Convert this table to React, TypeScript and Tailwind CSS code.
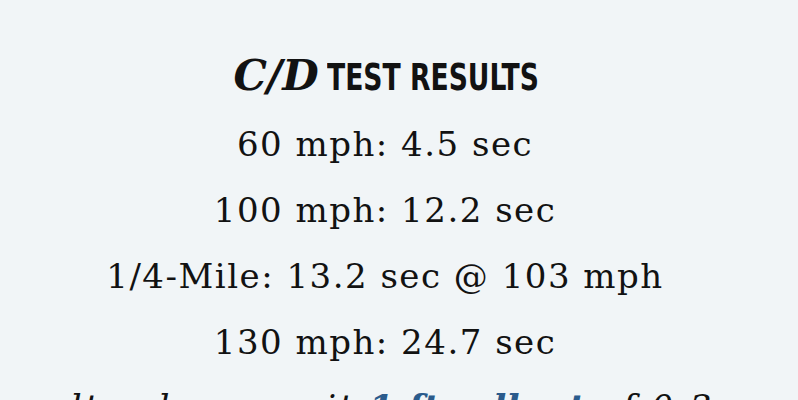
import React from "react";

const results = [
  "60 mph: 4.5 sec",
  "100 mph: 12.2 sec",
  "1/4-Mile: 13.2 sec @ 103 mph",
  "130 mph: 24.7 sec",
];

export default function App() {
  return (
    <div className="h-[400px] w-[798px] overflow-hidden bg-[#f1f5f7] text-[#121212]">
      <div className="flex flex-col items-center pr-[28px] pt-[43px] font-['DejaVu_Serif',serif] text-[34px] leading-[66px] tracking-[1.5px]">
        {/* Heading */}
        <h3 className="flex items-baseline gap-2 leading-[66px] tracking-normal">
          <span className="font-bold italic text-[42px]">C/D</span>
          <span className="inline-block w-[210px]">
            <span className="inline-block origin-left whitespace-nowrap font-['DejaVu_Sans_Condensed','DejaVu_Sans',sans-serif] text-[37px] font-bold scale-x-[0.8]">
              TEST RESULTS
            </span>
          </span>
        </h3>

        {results.map((r) => (
          <p key={r} className="whitespace-nowrap">
            {r}
          </p>
        ))}

        <p className="ml-[10px] whitespace-nowrap italic text-[35px] tracking-[2.5px]">
          Results above omit{" "}
          <a className="font-bold tracking-[0px] text-[#2b5b8c]">1-ft rollout</a> of 0.3
          sec.
        </p>
      </div>
    </div>
  );
}
